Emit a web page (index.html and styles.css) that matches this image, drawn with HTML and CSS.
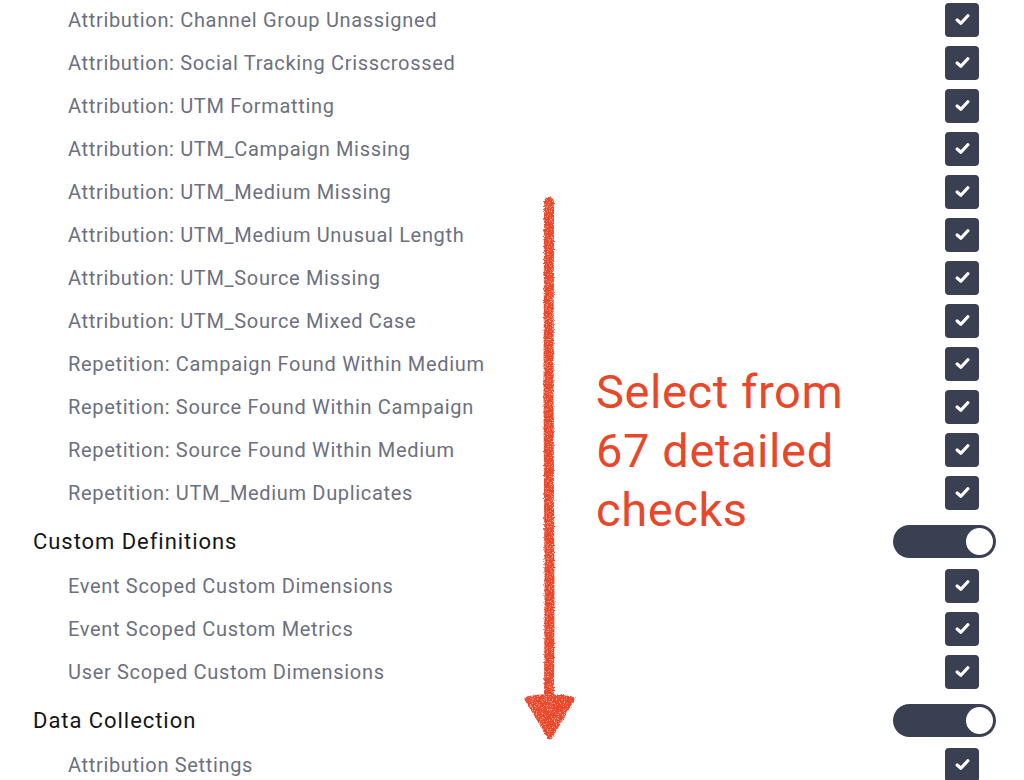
FILE: index.html
```html
<!DOCTYPE html>
<html lang="en">

<head>
    <meta charset="UTF-8">
    <meta name="viewport" content="width=device-width, initial-scale=1.0">
    <title>Audit Checks</title>
    <!-- Css Linkup -->
    <link rel="stylesheet" href="styles.css">
</head>

<body>
    <div class="checks">
        <div class="item"><span>Attribution: Channel Group Unassigned</span><span class="box"><svg viewBox="0 0 14 12"><polyline points="2,6.5 5.5,9.5 12,2.5"/></svg></span></div>
        <div class="item"><span>Attribution: Social Tracking Crisscrossed</span><span class="box"><svg viewBox="0 0 14 12"><polyline points="2,6.5 5.5,9.5 12,2.5"/></svg></span></div>
        <div class="item"><span>Attribution: UTM Formatting</span><span class="box"><svg viewBox="0 0 14 12"><polyline points="2,6.5 5.5,9.5 12,2.5"/></svg></span></div>
        <div class="item"><span>Attribution: UTM_Campaign Missing</span><span class="box"><svg viewBox="0 0 14 12"><polyline points="2,6.5 5.5,9.5 12,2.5"/></svg></span></div>
        <div class="item"><span>Attribution: UTM_Medium Missing</span><span class="box"><svg viewBox="0 0 14 12"><polyline points="2,6.5 5.5,9.5 12,2.5"/></svg></span></div>
        <div class="item"><span>Attribution: UTM_Medium Unusual Length</span><span class="box"><svg viewBox="0 0 14 12"><polyline points="2,6.5 5.5,9.5 12,2.5"/></svg></span></div>
        <div class="item"><span>Attribution: UTM_Source Missing</span><span class="box"><svg viewBox="0 0 14 12"><polyline points="2,6.5 5.5,9.5 12,2.5"/></svg></span></div>
        <div class="item"><span>Attribution: UTM_Source Mixed Case</span><span class="box"><svg viewBox="0 0 14 12"><polyline points="2,6.5 5.5,9.5 12,2.5"/></svg></span></div>
        <div class="item"><span>Repetition: Campaign Found Within Medium</span><span class="box"><svg viewBox="0 0 14 12"><polyline points="2,6.5 5.5,9.5 12,2.5"/></svg></span></div>
        <div class="item"><span>Repetition: Source Found Within Campaign</span><span class="box"><svg viewBox="0 0 14 12"><polyline points="2,6.5 5.5,9.5 12,2.5"/></svg></span></div>
        <div class="item"><span>Repetition: Source Found Within Medium</span><span class="box"><svg viewBox="0 0 14 12"><polyline points="2,6.5 5.5,9.5 12,2.5"/></svg></span></div>
        <div class="item"><span>Repetition: UTM_Medium Duplicates</span><span class="box"><svg viewBox="0 0 14 12"><polyline points="2,6.5 5.5,9.5 12,2.5"/></svg></span></div>

        <div class="group"><span>Custom Definitions</span><span class="toggle"><span class="knob"></span></span></div>
        <div class="item"><span>Event Scoped Custom Dimensions</span><span class="box"><svg viewBox="0 0 14 12"><polyline points="2,6.5 5.5,9.5 12,2.5"/></svg></span></div>
        <div class="item"><span>Event Scoped Custom Metrics</span><span class="box"><svg viewBox="0 0 14 12"><polyline points="2,6.5 5.5,9.5 12,2.5"/></svg></span></div>
        <div class="item"><span>User Scoped Custom Dimensions</span><span class="box"><svg viewBox="0 0 14 12"><polyline points="2,6.5 5.5,9.5 12,2.5"/></svg></span></div>

        <div class="group"><span>Data Collection</span><span class="toggle"><span class="knob"></span></span></div>
        <div class="item"><span>Attribution Settings</span><span class="box"><svg viewBox="0 0 14 12"><polyline points="2,6.5 5.5,9.5 12,2.5"/></svg></span></div>
    </div>

    <!-- hand drawn note over the list -->
    <svg class="arrow" width="80" height="560" viewBox="0 0 80 560">
        <defs>
            <filter id="crayon" x="-20%" y="-5%" width="140%" height="110%">
                <feTurbulence type="fractalNoise" baseFrequency="0.7" numOctaves="2" seed="3" result="noise"/>
                <feDisplacementMap in="SourceGraphic" in2="noise" scale="3" xChannelSelector="R" yChannelSelector="G" result="rough"/>
                <feTurbulence type="fractalNoise" baseFrequency="1.4" numOctaves="1" seed="8" result="grain"/>
                <feColorMatrix in="grain" type="matrix" values="0 0 0 0 0  0 0 0 0 0  0 0 0 0 0  0 0 0 -3 2.6" result="mask"/>
                <feComposite in="rough" in2="mask" operator="in"/>
            </filter>
        </defs>
        <g filter="url(#crayon)" fill="#e8472a" stroke="#e8472a" stroke-linejoin="round" stroke-linecap="round">
            <path d="M30 6 L29.5 200 L30.5 400 L30 505" fill="none" stroke-width="10"/>
            <path d="M8 503 Q30 498 53 503 L31 541 Z" stroke-width="5"/>
        </g>
    </svg>
    <div class="note">Select from<br>67 detailed<br>checks</div>
</body>

</html>
```

FILE: styles.css
```css
body {
    margin: 0;
    background-color: #ffffff;
    font-family: Roboto, "Liberation Sans", sans-serif;
}

.checks {
    margin-top: -2px;
    padding-left: 33px;
    padding-right: 28px;
}

.item {
    display: flex;
    justify-content: space-between;
    align-items: center;
    height: 43px;
    padding-left: 35px;
    padding-right: 17px;
    font-size: 20px;
    letter-spacing: 0.67px;
    color: #6c7080;
}

.group {
    display: flex;
    justify-content: space-between;
    align-items: center;
    height: 50px;
    padding-top: 4px;
    box-sizing: border-box;
    font-size: 22px;
    letter-spacing: 0.95px;
    color: #151515;
}

.box {
    width: 34px;
    height: 34px;
    border-radius: 4px;
    background-color: #3a4051;
    display: flex;
    justify-content: center;
    align-items: center;
}

.box svg {
    width: 15px;
    height: 13px;
}

.box polyline {
    fill: none;
    stroke: #ffffff;
    stroke-width: 3;
    stroke-linecap: round;
    stroke-linejoin: round;
}

.toggle {
    width: 103px;
    height: 33px;
    border-radius: 17px;
    background-color: #3a4051;
    display: flex;
    justify-content: flex-end;
    align-items: center;
    padding-right: 3px;
    box-sizing: border-box;
}

.knob {
    width: 27px;
    height: 27px;
    border-radius: 50%;
    background-color: #ffffff;
}

.arrow {
    position: absolute;
    left: 519px;
    top: 196px;
}

.note {
    position: absolute;
    left: 596px;
    top: 362px;
    font-family: Roboto, "Liberation Sans", sans-serif;
    font-size: 47px;
    line-height: 59px;
    letter-spacing: 0.6px;
    color: #e8472a;
}
```
